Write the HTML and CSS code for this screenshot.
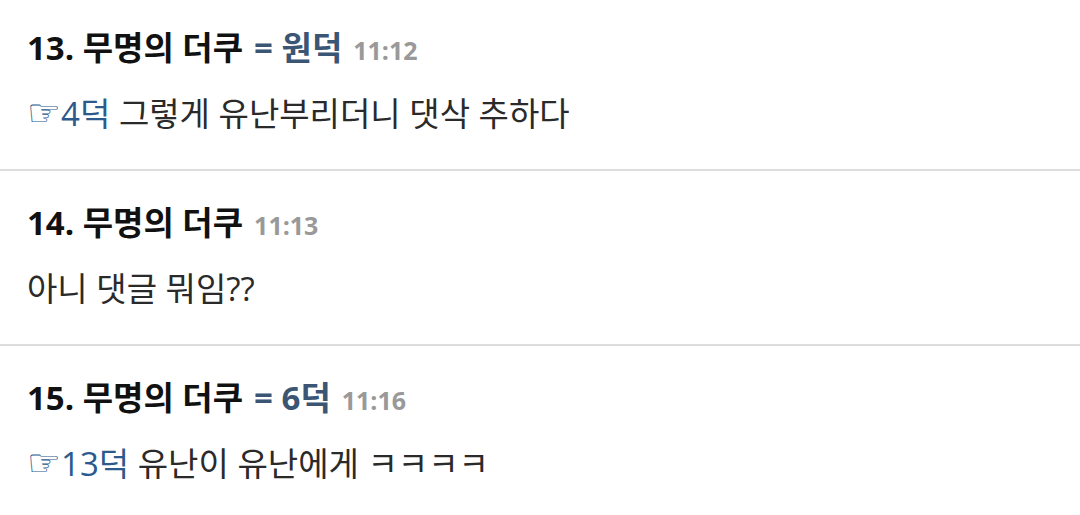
FILE: index.html
```html
<!DOCTYPE html>
<html lang="ko">
<head>
    <meta charset="UTF-8">
    <meta name="viewport" content="width=device-width, initial-scale=1.0">
    <title>댓글</title>
    <link rel="stylesheet" href="styles.css">
</head>
<body>
    <ul class="comment-list">
        <li class="comment">
            <div class="comment-head">
                <span class="comment-name">13. 무명의 더쿠</span>
                <span class="comment-self">= 원덕</span>
                <span class="comment-time">11:12</span>
            </div>
            <p class="comment-body"><a class="reply-ref" href="#"><span class="hand">☞</span>4덕</a> 그렇게 유난부리더니 댓삭 추하다</p>
        </li>
        <li class="comment">
            <div class="comment-head">
                <span class="comment-name">14. 무명의 더쿠</span>
                <span class="comment-time">11:13</span>
            </div>
            <p class="comment-body">아니 댓글 뭐임??</p>
        </li>
        <li class="comment">
            <div class="comment-head">
                <span class="comment-name">15. 무명의 더쿠</span>
                <span class="comment-self">= 6덕</span>
                <span class="comment-time">11:16</span>
            </div>
            <p class="comment-body"><a class="reply-ref" href="#"><span class="hand">☞</span>13덕</a> 유난이 유난에게 ㅋㅋㅋㅋ</p>
        </li>
    </ul>
</body>
</html>
```

FILE: styles.css
```css
:root {
    --text-color: #2a2a2a;
    --link-color: #2d5a8c;
    --self-color: #3b5575;
    --muted-color: #999;
    --line-color: #ddd;
}

* {
    margin: 0;
    padding: 0;
    box-sizing: border-box;
}

body {
    font-family: "Open Sans", "Noto Sans CJK KR", sans-serif;
    background-color: white;
    color: var(--text-color);
    overflow: hidden;
}

.comment-list {
    list-style: none;
    margin-top: -4px;
}

.comment {
    padding: 32px 27px 35px;
    border-bottom: 2px solid var(--line-color);
}

.comment-head {
    display: flex;
    align-items: baseline;
    gap: 11px;
    font-size: 33px;
    line-height: 40px;
    font-weight: bold;
}

.comment-name {
    color: #111;
}

.comment-self {
    color: var(--self-color);
}

.comment-time {
    font-size: 25px;
    color: var(--muted-color);
}

.comment-body {
    margin-top: 24px;
    font-size: 33px;
    line-height: 40px;
}

.reply-ref {
    color: var(--link-color);
    text-decoration: none;
}

.hand {
    font-family: "DejaVu Sans", sans-serif;
    font-size: 38px;
    line-height: 1;
}
```
